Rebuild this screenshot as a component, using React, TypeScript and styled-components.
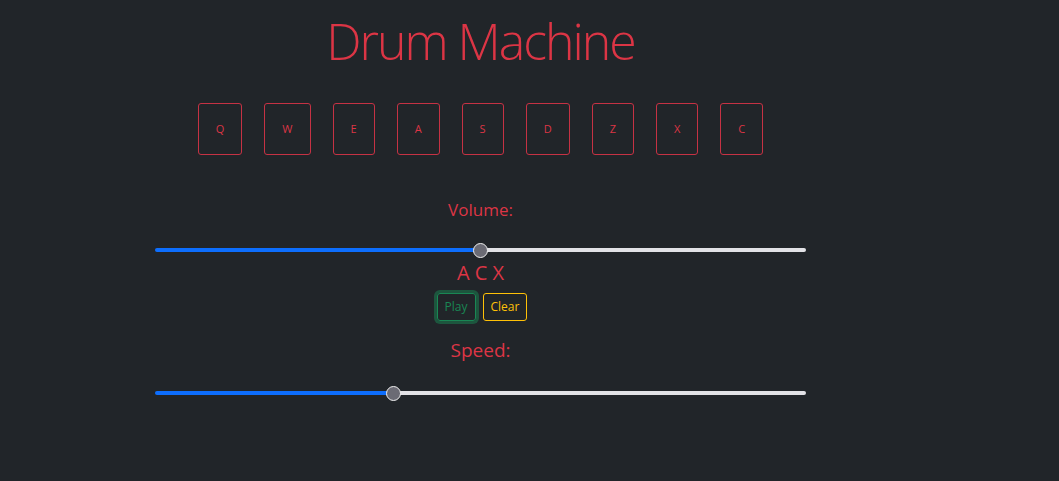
import React, { useState } from "react";
import styled, { createGlobalStyle } from "styled-components";

const GlobalStyle = createGlobalStyle`
  html, body {
    margin: 0;
    padding: 0;
    background: #212529;
    height: 100%;
  }
  body {
    font-family: "Open Sans", "Noto Sans", "Liberation Sans", sans-serif;
    color: #dc3545;
  }
`;

const Page = styled.div`
  min-height: 481px;
  background: #212529;
  overflow: hidden;
`;

const Column = styled.div`
  width: 651px;
  margin-left: 155px;
  display: flex;
  flex-direction: column;
  align-items: center;
`;

const Title = styled.h1`
  margin: 16px 0 0;
  font-family: "Open Sans", sans-serif;
  font-weight: 300;
  font-size: 50px;
  line-height: 50px;
  letter-spacing: -2px;
  color: #dc3545;
`;

const PadRow = styled.div`
  display: flex;
  gap: 22px;
  margin-top: 37px;
`;

const Pad = styled.button`
  background: transparent;
  border: 1px solid #c63244;
  border-radius: 3px;
  color: #dc3545;
  font-family: "Open Sans", sans-serif;
  font-size: 11px;
  line-height: 16px;
  padding: 17px 17px;
  height: 52px;
  cursor: pointer;
`;

const Label = styled.div<{ $size: number; $top: number }>`
  margin-top: ${(p) => p.$top}px;
  font-size: ${(p) => p.$size}px;
  line-height: ${(p) => p.$size + 3}px;
  color: #dc3545;
`;

const Range = styled.input`
  -webkit-appearance: none;
  appearance: none;
  width: 100%;
  height: 16px;
  margin: 0;
  background: transparent;
  display: block;

  &::-webkit-slider-runnable-track {
    height: 4px;
    border-radius: 2px;
    background: linear-gradient(
      to right,
      #0d6efd calc(7.5px + var(--p) * (100% - 15px)),
      #e2e2e6 0
    );
  }
  &::-webkit-slider-thumb {
    -webkit-appearance: none;
    width: 15px;
    height: 15px;
    margin-top: -5.5px;
    border-radius: 50%;
    background: #6b6b74;
    border: 1.5px solid #f0f0f0;
    box-sizing: border-box;
  }
`;

const SliderWrap = styled.div<{ $top: number }>`
  width: 100%;
  margin-top: ${(p) => p.$top}px;
`;

const Sequence = styled.div`
  margin-top: 3px;
  font-size: 20px;
  line-height: 24px;
  color: #dc3545;
`;

const ButtonRow = styled.div`
  display: flex;
  gap: 7px;
  margin-top: 8px;
  padding-left: 3px;
`;

const OutlineButton = styled.button<{ $color: string; $focus?: boolean }>`
  background: transparent;
  border: 1px solid ${(p) => p.$color};
  color: ${(p) => p.$color};
  border-radius: 3px;
  font-family: "Open Sans", sans-serif;
  font-size: 12px;
  line-height: 16px;
  padding: 5px 7px;
  height: 28px;
  box-shadow: ${(p) => (p.$focus ? "0 0 0 3px rgba(25,135,84,0.5)" : "none")};
  cursor: pointer;
`;

const pads = ["Q", "W", "E", "A", "S", "D", "Z", "X", "C"];

const Slider: React.FC<{
  min: number;
  max: number;
  value: number;
  onChange: (v: number) => void;
}> = ({ min, max, value, onChange }) => {
  const p = (value - min) / (max - min);
  return (
    <Range
      type="range"
      min={min}
      max={max}
      value={value}
      onChange={(e) => onChange(Number(e.target.value))}
      style={{ ["--p" as string]: p } as React.CSSProperties}
    />
  );
};

const App: React.FC = () => {
  const [volume, setVolume] = useState(50);
  const [speed, setSpeed] = useState(500);
  const [seq, setSeq] = useState(["A", "C", "X"]);

  return (
    <Page>
      <GlobalStyle />
      <Column>
        <Title>Drum Machine</Title>
        <PadRow>
          {pads.map((k) => (
            <Pad key={k} onClick={() => setSeq([...seq, k])}>
              {k}
            </Pad>
          ))}
        </PadRow>
        <Label $size={17} $top={45}>
          Volume:
        </Label>
        <SliderWrap $top={22}>
          <Slider min={0} max={100} value={volume} onChange={setVolume} />
        </SliderWrap>
        <Sequence>{seq.join(" ")}</Sequence>
        <ButtonRow>
          <OutlineButton $color="#198754" $focus>
            Play
          </OutlineButton>
          <OutlineButton $color="#ffc107" onClick={() => setSeq([])}>
            Clear
          </OutlineButton>
        </ButtonRow>
        <Label $size={19} $top={18}>
          Speed:
        </Label>
        <SliderWrap $top={24}>
          <Slider min={100} max={1200} value={speed} onChange={setSpeed} />
        </SliderWrap>
      </Column>
    </Page>
  );
};

export default App;
